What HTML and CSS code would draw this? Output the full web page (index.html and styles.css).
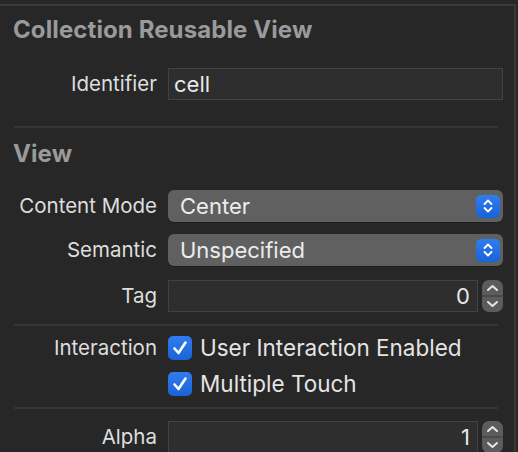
FILE: index.html
```html
<!DOCTYPE html>
<html lang="en">
<head>
    <meta charset="UTF-8">
    <title>Attributes Inspector</title>
    <link rel="stylesheet" href="styles.css">
</head>
<body>
    <div class="inspector">
        <section class="group">
            <h2>Collection Reusable View</h2>
            <div class="row row-field">
                <label>Identifier</label>
                <div class="field">cell</div>
            </div>
        </section>

        <hr class="sep sep-first">

        <section class="group">
            <h2 class="view-title">View</h2>
            <div class="row row-popup">
                <label>Content Mode</label>
                <div class="popup">
                    <span>Center</span>
                    <span class="popup-btn">
                        <svg width="12" height="16" viewBox="0 0 12 16"><path d="M2.5 6 L6 2.5 L9.5 6 M2.5 10 L6 13.5 L9.5 10" fill="none" stroke="#fff" stroke-width="1.8" stroke-linecap="round" stroke-linejoin="round"/></svg>
                    </span>
                </div>
            </div>
            <div class="row row-popup">
                <label>Semantic</label>
                <div class="popup">
                    <span>Unspecified</span>
                    <span class="popup-btn">
                        <svg width="12" height="16" viewBox="0 0 12 16"><path d="M2.5 6 L6 2.5 L9.5 6 M2.5 10 L6 13.5 L9.5 10" fill="none" stroke="#fff" stroke-width="1.8" stroke-linecap="round" stroke-linejoin="round"/></svg>
                    </span>
                </div>
            </div>
            <div class="row row-tag">
                <label>Tag</label>
                <div class="stepper-wrap">
                    <div class="field number">0</div>
                    <div class="stepper">
                        <svg width="21" height="32" viewBox="0 0 21 32"><path d="M6 10 L10.5 6 L15 10 M6 22 L10.5 26 L15 22" fill="none" stroke="#e6e6e6" stroke-width="2" stroke-linecap="round" stroke-linejoin="round"/></svg>
                    </div>
                </div>
            </div>
        </section>

        <hr class="sep sep-mid">

        <section class="group">
            <div class="row row-check">
                <label>Interaction</label>
                <div class="check"><span class="box"><svg width="24" height="24" viewBox="0 0 24 24"><path d="M6.5 12.5 L10.5 17 L17.5 6.5" fill="none" stroke="#fff" stroke-width="2.6" stroke-linecap="round" stroke-linejoin="round"/></svg></span>User Interaction Enabled</div>
            </div>
            <div class="row row-check">
                <label></label>
                <div class="check"><span class="box"><svg width="24" height="24" viewBox="0 0 24 24"><path d="M6.5 12.5 L10.5 17 L17.5 6.5" fill="none" stroke="#fff" stroke-width="2.6" stroke-linecap="round" stroke-linejoin="round"/></svg></span>Multiple Touch</div>
            </div>
        </section>

        <hr class="sep sep-last">

        <section class="group">
            <div class="row row-tag">
                <label>Alpha</label>
                <div class="stepper-wrap">
                    <div class="field number">1</div>
                    <div class="stepper">
                        <svg width="21" height="32" viewBox="0 0 21 32"><path d="M6 10 L10.5 6 L15 10 M6 22 L10.5 26 L15 22" fill="none" stroke="#e6e6e6" stroke-width="2" stroke-linecap="round" stroke-linejoin="round"/></svg>
                    </div>
                </div>
            </div>
        </section>
    </div>
</body>
</html>
```

FILE: styles.css
```css
html, body {
    margin: 0;
    padding: 0;
    background-color: #272727;
    height: 100%;
    overflow: hidden;
}
body {
    font-family: Inter, "Liberation Sans", sans-serif;
    font-size: 20.5px;
    line-height: 24px;
    color: #dedede;
}
.inspector {
    margin-top: 4px;
    width: 514px;
    height: 460px;
    border-top: 2px solid #3a3a3a;
    border-right: 2px solid #3a3a3a;
}
h2 {
    margin: 9px 0 0 13px;
    font-size: 24px;
    line-height: 30px;
    font-weight: 700;
    letter-spacing: 0.1px;
    color: #9a9a9a;
}
.view-title {
    margin-top: 11px;
}
.row {
    display: grid;
    grid-template-columns: 157px 335px;
    column-gap: 11px;
    align-items: center;
}
.row label {
    text-align: right;
}
.row-field {
    margin-top: 23px;
}
.field {
    height: 30px;
    line-height: 30px;
    padding: 0 7px 0 5px;
    font-size: 22px;
    background-color: #2e2e2e;
    border: 1px solid #424242;
    color: #e8e8e8;
}
.sep {
    margin: 0 16px 0 14px;
    border: 0;
    height: 2px;
    background-color: #363636;
}
.sep-first {
    margin-top: 26px;
}
.row-popup {
    margin-top: 12px;
}
.view-title + .row-popup {
    margin-top: 21px;
}
.popup {
    height: 32px;
    box-sizing: border-box;
    display: flex;
    align-items: center;
    justify-content: space-between;
    padding: 0 3px 0 12px;
    font-size: 22px;
    background-color: #606060;
    border-radius: 6px;
    box-shadow: 0 1px 0 #1e1e1e;
    color: #ececec;
}
.popup-btn {
    width: 24px;
    height: 23px;
    display: flex;
    align-items: center;
    justify-content: center;
    border-radius: 5px;
    background: linear-gradient(#2f7cf0, #1a63d6);
}
.row-tag {
    margin-top: 14px;
}
.stepper-wrap {
    display: flex;
    gap: 4px;
}
.stepper-wrap .field {
    flex: 1;
}
.number {
    text-align: right;
}
.stepper {
    width: 21px;
    height: 32px;
    border-radius: 7px;
    background: linear-gradient(#5c5c5c 0, #5c5c5c 15px, #4a4a4a 15px, #4a4a4a 17px, #5c5c5c 17px);
}
.stepper svg {
    display: block;
}
.sep-mid {
    margin-top: 12px;
}
.row-check {
    margin-top: 12px;
}
.sep-mid + .group .row-check:first-child {
    margin-top: 10px;
}
.check {
    display: flex;
    align-items: center;
    gap: 8px;
    height: 24px;
    font-size: 22.5px;
    color: #e4e4e4;
}
.box {
    width: 24px;
    height: 24px;
    border-radius: 5px;
    background: linear-gradient(#2f7cf0, #1a63d6);
}
.box svg {
    display: block;
}
.sep-last {
    margin-top: 11px;
}
.sep-last + .group .row-tag {
    margin-top: 12px;
}
```
